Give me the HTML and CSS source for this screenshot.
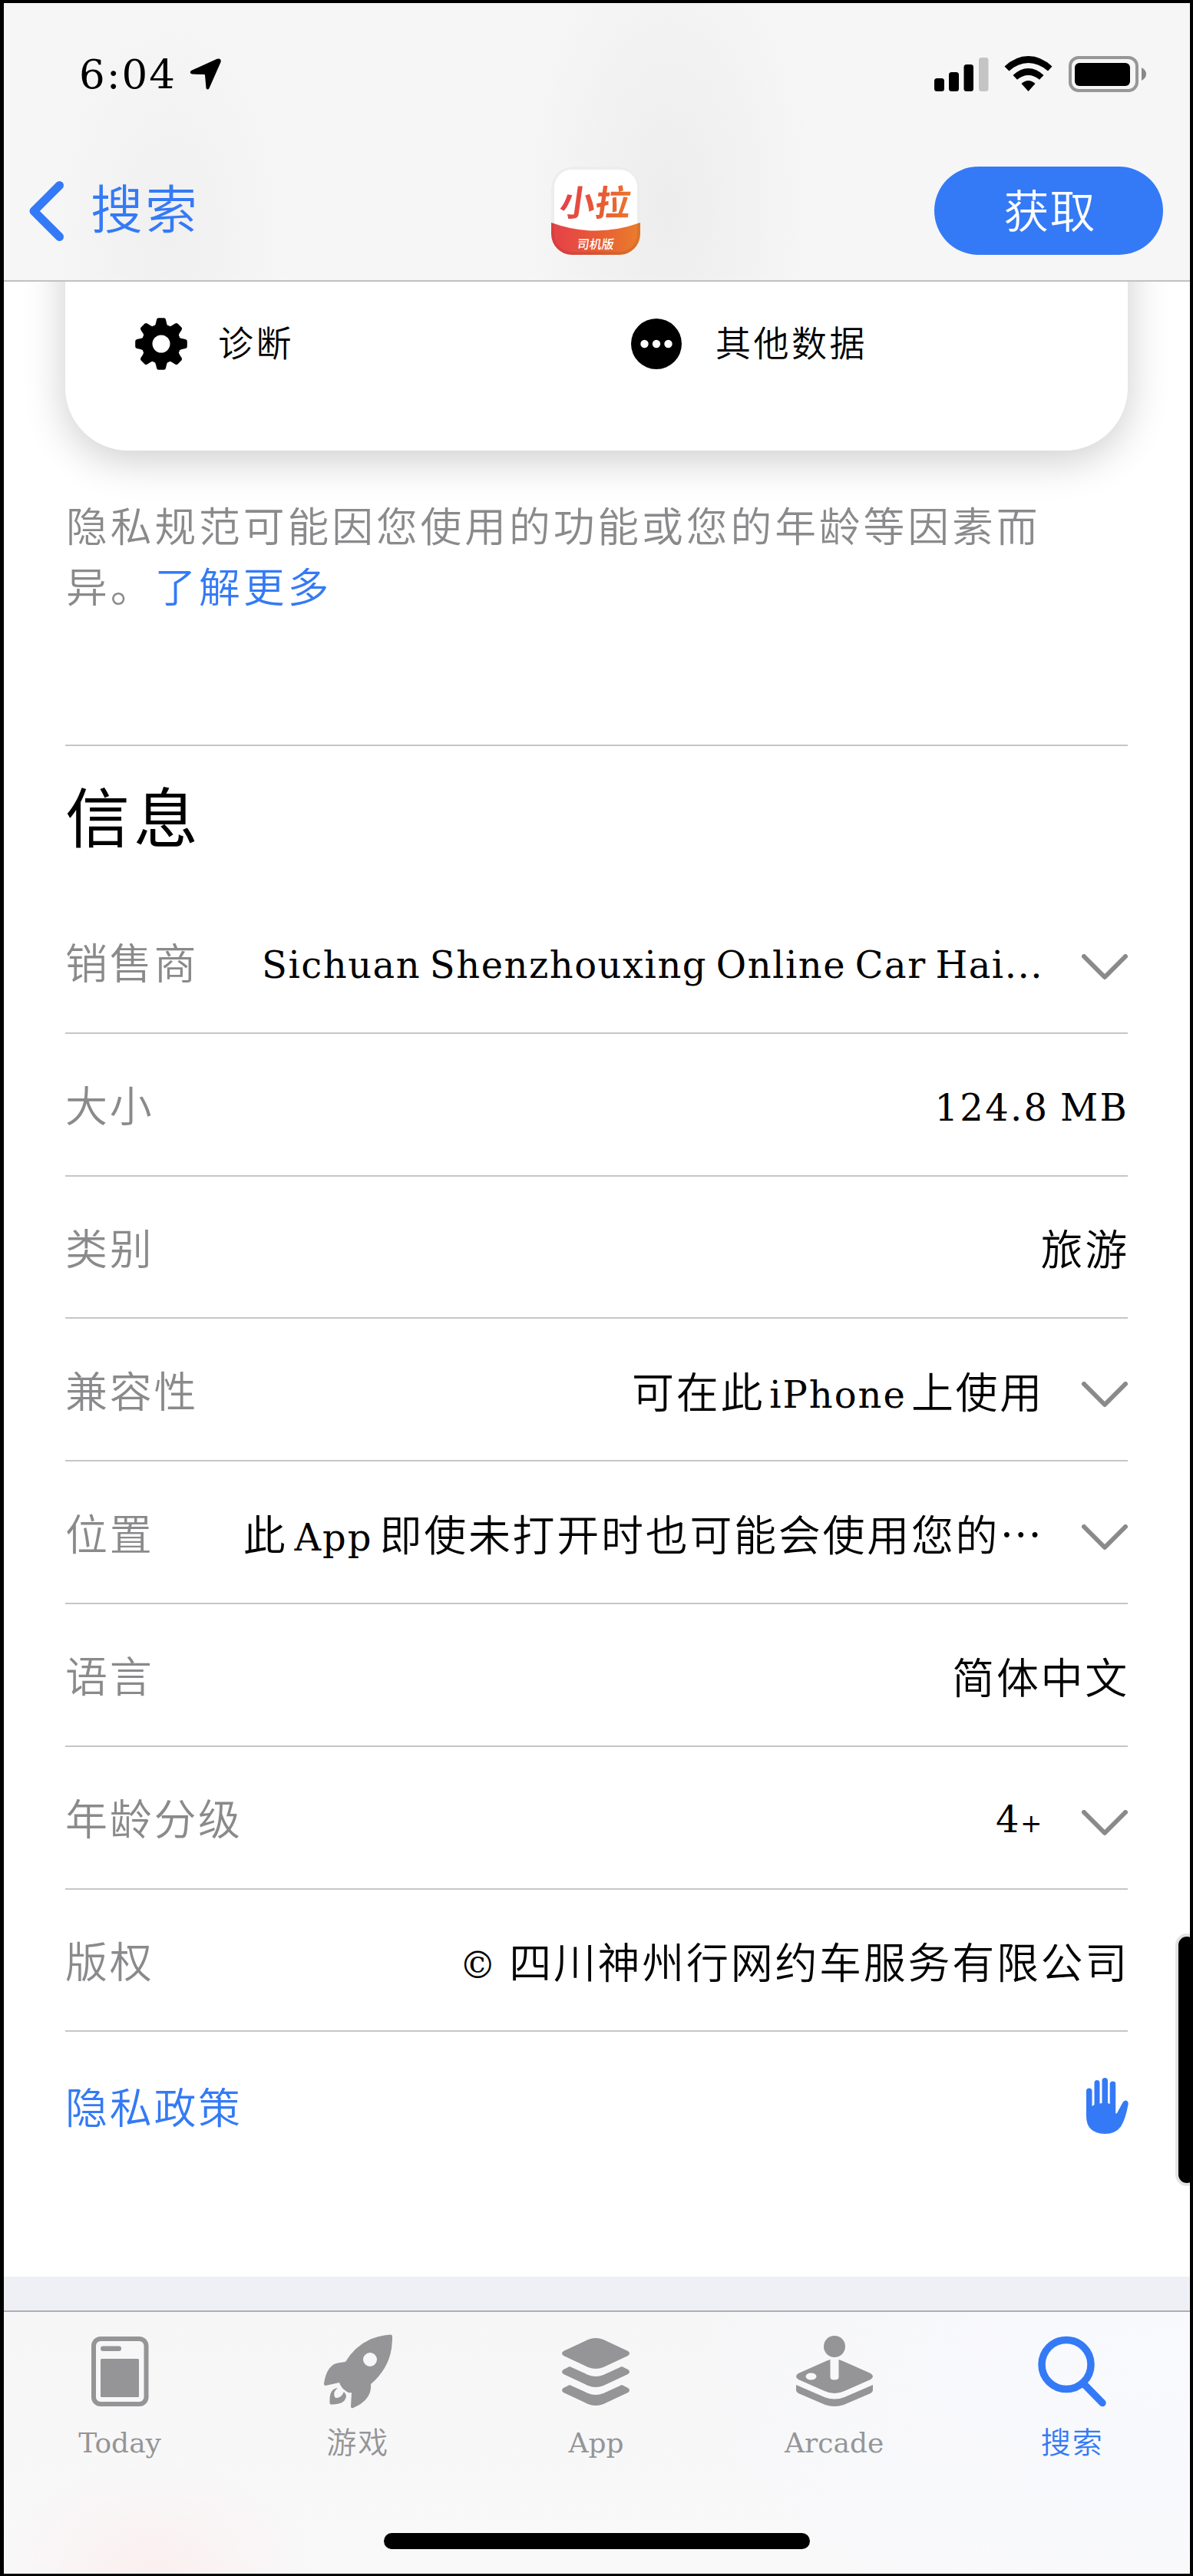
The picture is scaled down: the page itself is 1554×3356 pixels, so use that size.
FILE: index.html
```html
<!DOCTYPE html>
<html lang="zh-CN">
<head>
<meta charset="utf-8">
<title>App Store</title>
<link rel="stylesheet" href="styles.css">
</head>
<body>
<div class="phone">
  <header class="header">
    <div class="status">
      <div class="status-left">
        <span class="time">6:04</span>
        <svg class="loc" width="41" height="41" viewBox="0 0 41 41"><path d="M38 .5Q41.500 1 40.500 5L25.500 39Q23.500 42 21.500 39L20 22Q20 21 19 21L3 20.500Q-1 19 2 16L34 1.500Q36 .3 38 .5Z"/></svg>
      </div>
      <svg class="status-icons" width="278" height="50" viewBox="0 0 278 50">
        <rect x="0" y="30" width="13" height="17" rx="3.500"/>
        <rect x="19" y="22" width="13" height="25" rx="3.500"/>
        <rect x="38.500" y="12" width="12.500" height="35" rx="3.500"/>
        <rect x="58" y="3" width="12.500" height="44" rx="3.500" fill="#c4c4c4"/>
        <path d="M91.500 14.500Q106 1 122.500 1T153.500 14.500L148 20.500Q136 10 122.500 10T97.500 20.500Z"/>
        <path d="M102.500 26Q112 17 122.500 17T142.500 26L137 31.800Q130 26 122.500 26T108 31.800Z"/>
        <path d="M113.500 37Q122.500 29 131.500 37L122.500 47Z"/>
        <rect x="177" y="3" width="87" height="43" rx="11" fill="none" stroke="#979797" stroke-width="4"/>
        <rect x="183" y="10" width="72" height="30" rx="6"/>
        <path d="M270 16Q276 19 276 24.500T270 33Z" fill="#888"/>
      </svg>
    </div>
    <nav class="nav">
      <a class="back">
        <svg width="46" height="78" viewBox="0 0 46 78"><path d="M40.500 5.500L7 39L40.500 72.500" fill="none" stroke="#347af6" stroke-width="11" stroke-linecap="round" stroke-linejoin="round"/></svg>
        <span>搜索</span>
      </a>
      <div class="app-icon">
        <span class="app-name">小拉</span>
        <svg class="app-band" width="116" height="42" viewBox="0 0 116 42"><defs><linearGradient id="g"><stop offset=".1" stop-color="#e64546"/><stop offset=".5" stop-color="#e85a34"/><stop offset="1" stop-color="#ea7e2d"/></linearGradient></defs><path d="M0 0Q58 21 116 0V42H0Z" fill="url(#g)"/></svg>
        <span class="app-sub">司机版</span>
      </div>
      <button class="get">获取</button>
    </nav>
  </header>

  <main class="content">
    <section class="card">
      <div class="card-item">
        <svg width="70" height="70" viewBox="-35 -35 70 70">
          <defs><path id="tooth" d="M-9.500-22Q-7.500-24-7-27L-6-31.500Q-5.500-33.800-3.500-33.800H3.500Q5.500-33.800 6-31.500L7-27Q7.500-24 9.500-22Z"/></defs>
          <circle r="18.500" fill="none" stroke="#000" stroke-width="14"/>
          <use href="#tooth"/><use href="#tooth" transform="rotate(45)"/><use href="#tooth" transform="rotate(90)"/><use href="#tooth" transform="rotate(135)"/><use href="#tooth" transform="rotate(180)"/><use href="#tooth" transform="rotate(225)"/><use href="#tooth" transform="rotate(270)"/><use href="#tooth" transform="rotate(315)"/>
        </svg>
        <span>诊断</span>
      </div>
      <div class="card-item second">
        <svg width="66" height="66" viewBox="-33 -33 66 66"><circle r="33"/><circle cx="-15.500" r="5.200" fill="#fff"/><circle r="5.200" fill="#fff"/><circle cx="15.500" r="5.200" fill="#fff"/></svg>
        <span>其他数据</span>
      </div>
    </section>

    <p class="note">隐私规范可能因您使用的功能或您的年龄等因素而异。<a>了解更多</a></p>

    <section class="info">
      <h2>信息</h2>
      <dl>
        <div class="row"><dt>销售商</dt><dd class="seller">Sichuan Shenzhouxing Online Car Hai...</dd><svg class="chev" viewBox="0 0 60 34"><path d="M3 3L30 30L57 3"/></svg></div>
        <div class="row"><dt>大小</dt><dd class="size">124.8 MB</dd></div>
        <div class="row"><dt>类别</dt><dd class="cjk">旅游</dd></div>
        <div class="row"><dt>兼容性</dt><dd class="cjk device">可在此 <i>iPhone</i> 上使用</dd><svg class="chev" viewBox="0 0 60 34"><path d="M3 3L30 30L57 3"/></svg></div>
        <div class="row"><dt>位置</dt><dd class="cjk location">此 <i>App</i> 即使未打开时也可能会使用您的…</dd><svg class="chev" viewBox="0 0 60 34"><path d="M3 3L30 30L57 3"/></svg></div>
        <div class="row"><dt>语言</dt><dd class="cjk">简体中文</dd></div>
        <div class="row"><dt>年龄分级</dt><dd>4<span class="plus">+</span></dd><svg class="chev" viewBox="0 0 60 34"><path d="M3 3L30 30L57 3"/></svg></div>
        <div class="row"><dt>版权</dt><dd class="cjk"><i>©</i> 四川神州行网约车服务有限公司</dd></div>
        <div class="row link"><dt>隐私政策</dt>
          <svg class="hand" width="55" height="73" viewBox="0 0 55 73"><path d="M0 17Q0 13.500 3.700 13.500T7.500 17V37L10.500 35V6.500Q10.500 3 14 3T17.500 6.500V33.500L20.500 33V3.500Q20.500 0 24.200 0T28 3.500V33L30.700 34V8Q30.700 4.500 34.500 4.500T38.200 8V46Q39.500 47.500 40.500 45L47 33Q49 29 52 29.500Q55.500 31 54.500 35Q51 54 45 63.500Q38 73 24 73Q0 72 0 50Z" fill="#347af6"/></svg>
        </div>
      </dl>
    </section>
  </main>

  <footer class="tabbar">
    <div class="tabs">
      <a class="tab"><svg width="100" height="98" viewBox="0 0 100 98"><rect x="16" y="6" width="68.500" height="85" rx="9" fill="none" stroke="#959597" stroke-width="6"/><rect x="25" y="15.500" width="27" height="6.500" rx="3.200"/><rect x="25" y="32" width="50" height="50" rx="1.500"/></svg><span>Today</span></a>
      <a class="tab"><svg width="100" height="98" viewBox="0 0 100 98"><path fill-rule="evenodd" d="M93 .5Q95 .5 95 3Q96 40 67 65Q69 85 44 96Q41 97 41 94L42 76Q39 77 36 75Q28 70 26 63L8 67Q6 67 6 64Q10 38 27 37L34 36Q54 3 93 .5ZM66 24A9 9 0 1 0 66 42A9 9 0 1 0 66 24Z"/><path d="M24 70Q16 76 21 83Q28 84 32 75Q35 78 35 81Q33 92 15 91.500Q13 91 13.500 87Q13 71 24 70Z"/></svg><span class="cjk-label">游戏</span></a>
      <a class="tab"><svg width="100" height="98" viewBox="0 0 100 98"><path d="M8 22L40 7Q50 3 60 7L92 22Q96 25 92 28L60 43Q50 47 40 43L8 28Q4 25 8 22Z"/><path d="M16 42L40 53Q50 57 60 53L84 42L92 46Q96 49 92 52L60 67Q50 71 40 67L8 52Q4 49 8 46Z"/><path d="M16 66L40 77Q50 81 60 77L84 66L92 70Q96 73 92 76L60 91Q50 95 40 91L8 76Q4 73 8 70Z"/></svg><span>App</span></a>
      <a class="tab"><svg width="100" height="98" viewBox="0 0 100 98"><circle cx="50" cy="16" r="14"/><path fill-rule="evenodd" d="M44.500 33V56Q44.500 59.500 50 59.500T55.500 56V33L61 35L97 51Q103 55 97 59L63 74Q50 80 37 74L3 59Q-3 55 3 51L39 35ZM19.500 50.500A7 4.500 0 1 0 19.500 59.500A7 4.500 0 1 0 19.500 50.500Z"/><path d="M0 66L37 82Q50 87 63 82L100 66V73Q100 75 97 77L62 92Q50 96 38 92L3 77Q0 75 0 73Z"/></svg><span>Arcade</span></a>
      <a class="tab active"><svg width="100" height="98" viewBox="0 0 100 98"><circle cx="42" cy="39.500" r="32" fill="none" stroke="#347af6" stroke-width="9.500"/><path d="M66 66L89 89.500" stroke="#347af6" stroke-width="9.500" stroke-linecap="round"/></svg><span class="cjk-label">搜索</span></a>
    </div>
    <div class="home"></div>
  </footer>
  <div class="side-button"></div>
</div>
</body>
</html>
```
FILE: styles.css
```css
* { box-sizing: border-box; }
body { margin: 0; background: #fff; }
.phone {
  position: relative;
  display: flex;
  flex-direction: column;
  width: 1554px;
  height: 3356px;
  overflow: hidden;
  background: #fff;
  color: #000;
  font-family: "DejaVu Serif", "Noto Sans CJK SC", serif;
  font-weight: 350;
}
.phone::after {
  content: "";
  position: absolute;
  z-index: 2;
  inset: 0;
  border: solid #000;
  border-width: 4px 4px 3px 5px;
  pointer-events: none;
}
a { color: #347af6; }
svg { display: block; flex: none; }

.header {
  position: relative;
  z-index: 1;
  height: 367px;
  flex: none;
  border-bottom: 2px solid #c0c1c0;
  background:
    radial-gradient(ellipse 190px 380px at 870px 270px, #ededed, rgba(237,237,237,0)),
    radial-gradient(ellipse 160px 320px at 220px 320px, #f0f0f0, rgba(240,240,240,0)),
    #f6f6f6;
}
.status {
  display: flex;
  justify-content: space-between;
  height: 217px;
  padding: 72px 59px 0 103px;
}
.status-left { display: flex; gap: 18px; }
.time { width: 126px; font-size: 53px; line-height: 50px; letter-spacing: 2px; white-space: nowrap; }
.loc { margin-top: 4px; }
.nav {
  display: grid;
  grid-template-columns: 1fr 116px 1fr;
  height: 115px;
  padding: 0 39px 0 37px;
}
.back { display: flex; align-items: center; gap: 35px; font-size: 68px; line-height: 115px; letter-spacing: 3px; }
.app-icon {
  position: relative;
  height: 115px;
  overflow: hidden;
  border-radius: 27px;
  background: #fff;
  font-family: "Noto Sans CJK SC", sans-serif;
}
.app-icon::after {
  content: "";
  position: absolute;
  inset: 0;
  border-radius: 27px;
  box-shadow: inset 0 0 0 4px rgba(0,0,0,.07);
}
.app-name {
  display: block;
  margin-left: 12px;
  font-size: 46px;
  line-height: 88px;
  font-weight: 700;
  white-space: nowrap;
  transform: skewX(-8deg);
  background: linear-gradient(90deg, #e5404b, #e85a34 50%, #ea7e2d);
  -webkit-background-clip: text;
  background-clip: text;
  color: transparent;
}
.app-band { position: absolute; left: 0; bottom: 0; }
.app-sub {
  position: absolute;
  left: 0;
  right: 0;
  bottom: 5px;
  color: #fff;
  font-size: 16px;
  line-height: 20px;
  font-weight: 500;
  text-align: center;
  transform: skewX(-8deg);
}
.get {
  justify-self: end;
  width: 298px;
  height: 115px;
  padding: 0 0 5px 3px;
  border: 0;
  border-radius: 58px;
  background: #347af6;
  color: #fff;
  font: 350 59px/108px "Noto Sans CJK SC", sans-serif;
  letter-spacing: 1px;
}

.content { flex: none; height: 2643px; background: linear-gradient(#fff 2599px, #eff0f6 2599px); }
.card {
  display: flex;
  width: 1384px;
  height: 440px;
  margin: -220px 0 0 85px;
  padding: 266px 0 0 90px;
  border-radius: 82px;
  background: #fff;
  box-shadow: 0 12px 54px rgba(0,0,0,.2);
}
.card-item { display: flex; align-items: center; height: 70px; width: 651px; gap: 39px; font-size: 46px; letter-spacing: 3.500px; line-height: 70px; }
.card-item.second { gap: 44px; }
.note {
  width: 1330px;
  margin: 62px 0 0 86px;
  height: 321px;
  color: #8a8a8c;
  font-size: 53.800px;
  line-height: 78.500px;
  letter-spacing: 3.900px;
}
.info {
  width: 1384px;
  margin-left: 85px;
  border-top: 2px solid #c6c6c8;
}
h2 { margin: 0; height: 189px; padding-top: 34px; font-size: 84px; line-height: 124px; font-weight: 400; letter-spacing: 5px; }
dl { margin: 0; }
.row {
  display: flex;
  align-items: center;
  height: 185.800px;
  border-bottom: 2px solid #c6c6c8;
  white-space: nowrap;
}
dt { margin-top: 7px; color: #8a8a8c; font-size: 55px; letter-spacing: 2.700px; line-height: 80px; }
dd { margin: 9px -1px 0 auto; font-size: 48px; letter-spacing: 1.500px; line-height: 80px; }
.seller { word-spacing: -5px; }
.size { word-spacing: -3px; letter-spacing: 2.300px; }
.cjk {
  margin-top: 0;
  margin-right: -2px;
  font-family: "Noto Sans CJK SC", sans-serif;
  font-size: 55px;
  letter-spacing: 2.700px;
}
.device { word-spacing: -9px; }
.location { word-spacing: -6px; }
dd i { font: 350 48px/1 "DejaVu Serif", serif; letter-spacing: 2px; }
.plus { font-size: 34px; }
.chev { width: 60px; height: 34px; margin: 14px 0 0 51px; fill: none; stroke: #8a8a8c; stroke-width: 6; stroke-linecap: round; stroke-linejoin: round; }
.row.link { border: 0; height: 190px; }
.link dt { color: #347af6; margin-top: 10px; }
.hand { margin-left: auto; margin-right: -1px; margin-top: 3px; }

.tabbar {
  flex: 1;
  border-top: 2px solid #aeaeb3;
  background:
    radial-gradient(ellipse 210px 150px at 200px 345px, #fbefef, rgba(251,239,239,0)),
    radial-gradient(ellipse 620px 420px at 1500px 60px, #f9fafe, rgba(249,250,254,0)),
    linear-gradient(#f6f6f7, #f9f9fa);
}
.tabs { display: grid; grid-template-columns: repeat(5, 310.200px); height: 288px; padding-top: 29px; margin-left: 1px; }
.tab { display: flex; flex-direction: column; align-items: center; gap: 14px; color: #959597; fill: currentColor; font-size: 36px; line-height: 60px; }
.cjk-label { font-size: 39px; letter-spacing: 2px; }
.tab.active { color: #347af6; }
.home { width: 555px; height: 21px; margin-left: 500px; border-radius: 11px; background: #000; }
.side-button {
  position: absolute;
  left: 1531px;
  top: 2519px;
  width: 30px;
  height: 329px;
  border: 4px solid #e2e2e2;
  border-radius: 17px;
  background: #000;
}
```
